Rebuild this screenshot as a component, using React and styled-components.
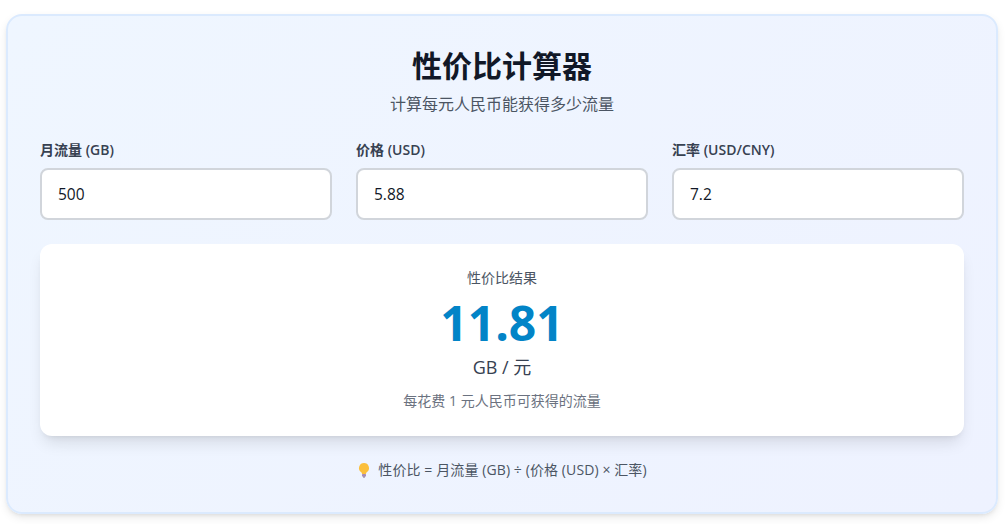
import React from 'react';
import styled, { createGlobalStyle } from 'styled-components';

const GlobalStyle = createGlobalStyle`
  body {
    margin: 0;
    background: #fff;
    font-family: "Open Sans", "Noto Sans CJK SC", sans-serif;
  }
`;

const Page = styled.div`
  padding: 14px 10px 10px 6px;
`;

const Card = styled.div`
  box-sizing: border-box;
  height: 500px;
  padding: 30px 32px;
  border: 2px solid #dbeafe;
  border-radius: 16px;
  background: linear-gradient(135deg, #eff6ff, #eef2ff);
  box-shadow: 0 4px 10px -1px rgba(0, 0, 0, 0.1), 0 2px 4px -2px rgba(0, 0, 0, 0.1);
`;

const Header = styled.div`
  text-align: center;
  margin-bottom: 24px;
`;

const Title = styled.h1`
  margin: 0 0 6px;
  font-size: 30px;
  line-height: 40px;
  font-weight: 700;
  color: #111827;
`;

const Subtitle = styled.p`
  margin: 0;
  font-size: 16px;
  line-height: 24px;
  color: #4b5563;
`;

const Fields = styled.div`
  display: grid;
  grid-template-columns: repeat(3, 1fr);
  gap: 24px;
  margin-bottom: 24px;
`;

const Label = styled.label`
  display: block;
  margin-bottom: 8px;
  font-size: 14px;
  line-height: 20px;
  font-weight: 600;
  color: #374151;
`;

const Input = styled.input`
  display: block;
  box-sizing: border-box;
  width: 100%;
  height: 52px;
  padding: 12px 16px;
  border: 2px solid #d1d5db;
  border-radius: 8px;
  background: #fff;
  font: inherit;
  font-size: 15.5px;
  color: #111827;
  outline: none;
`;

const Result = styled.div`
  height: 192px;
  box-sizing: border-box;
  padding: 24px;
  border-radius: 12px;
  background: #fff;
  text-align: center;
  box-shadow: 0 10px 15px -3px rgba(0, 0, 0, 0.1), 0 4px 6px -4px rgba(0, 0, 0, 0.1);
`;

const ResultLabel = styled.div`
  font-size: 14px;
  line-height: 20px;
  color: #4b5563;
`;

const Value = styled.div`
  margin-top: 5px;
  font-size: 48px;
  line-height: 60px;
  font-weight: 700;
  color: #0284c7;
`;

const Unit = styled.div`
  font-size: 18px;
  line-height: 28px;
  color: #374151;
`;

const Note = styled.div`
  margin-top: 10px;
  font-size: 14px;
  line-height: 20px;
  color: #6b7280;
`;

const Formula = styled.div`
  display: flex;
  align-items: center;
  justify-content: center;
  gap: 7px;
  margin-top: 24px;
  font-size: 14px;
  line-height: 20px;
  letter-spacing: 0.1px;
  color: #4b5563;
`;

const Bulb = () => (
  <svg width="14" height="16" viewBox="0 0 14 16">
    <path d="M7 1a5 5 0 0 0-3 9c.8.7 1 1.4 1 2h4c0-.6.2-1.3 1-2a5 5 0 0 0-3-9z" fill="#fbbf3c" />
    <rect x="5" y="12" width="4" height="2.5" rx="0.6" fill="#a78bb5" />
    <rect x="6" y="14.5" width="2" height="1" fill="#7d6a8c" />
  </svg>
);

const fields = [
  { label: '月流量 (GB)', value: '500' },
  { label: '价格 (USD)', value: '5.88' },
  { label: '汇率 (USD/CNY)', value: '7.2' },
];

const App = () => (
  <Page>
    <GlobalStyle />
    <Card>
      <Header>
        <Title>性价比计算器</Title>
        <Subtitle>计算每元人民币能获得多少流量</Subtitle>
      </Header>
      <Fields>
        {fields.map(el => (
          <div key={el.label}>
            <Label>{el.label}</Label>
            <Input type="number" defaultValue={el.value} />
          </div>
        ))}
      </Fields>
      <Result>
        <ResultLabel>性价比结果</ResultLabel>
        <Value>11.81</Value>
        <Unit>GB / 元</Unit>
        <Note>每花费 1 元人民币可获得的流量</Note>
      </Result>
      <Formula>
        <Bulb />
        <span>性价比 = 月流量 (GB) ÷ (价格 (USD) × 汇率)</span>
      </Formula>
    </Card>
  </Page>
);

export default App;
